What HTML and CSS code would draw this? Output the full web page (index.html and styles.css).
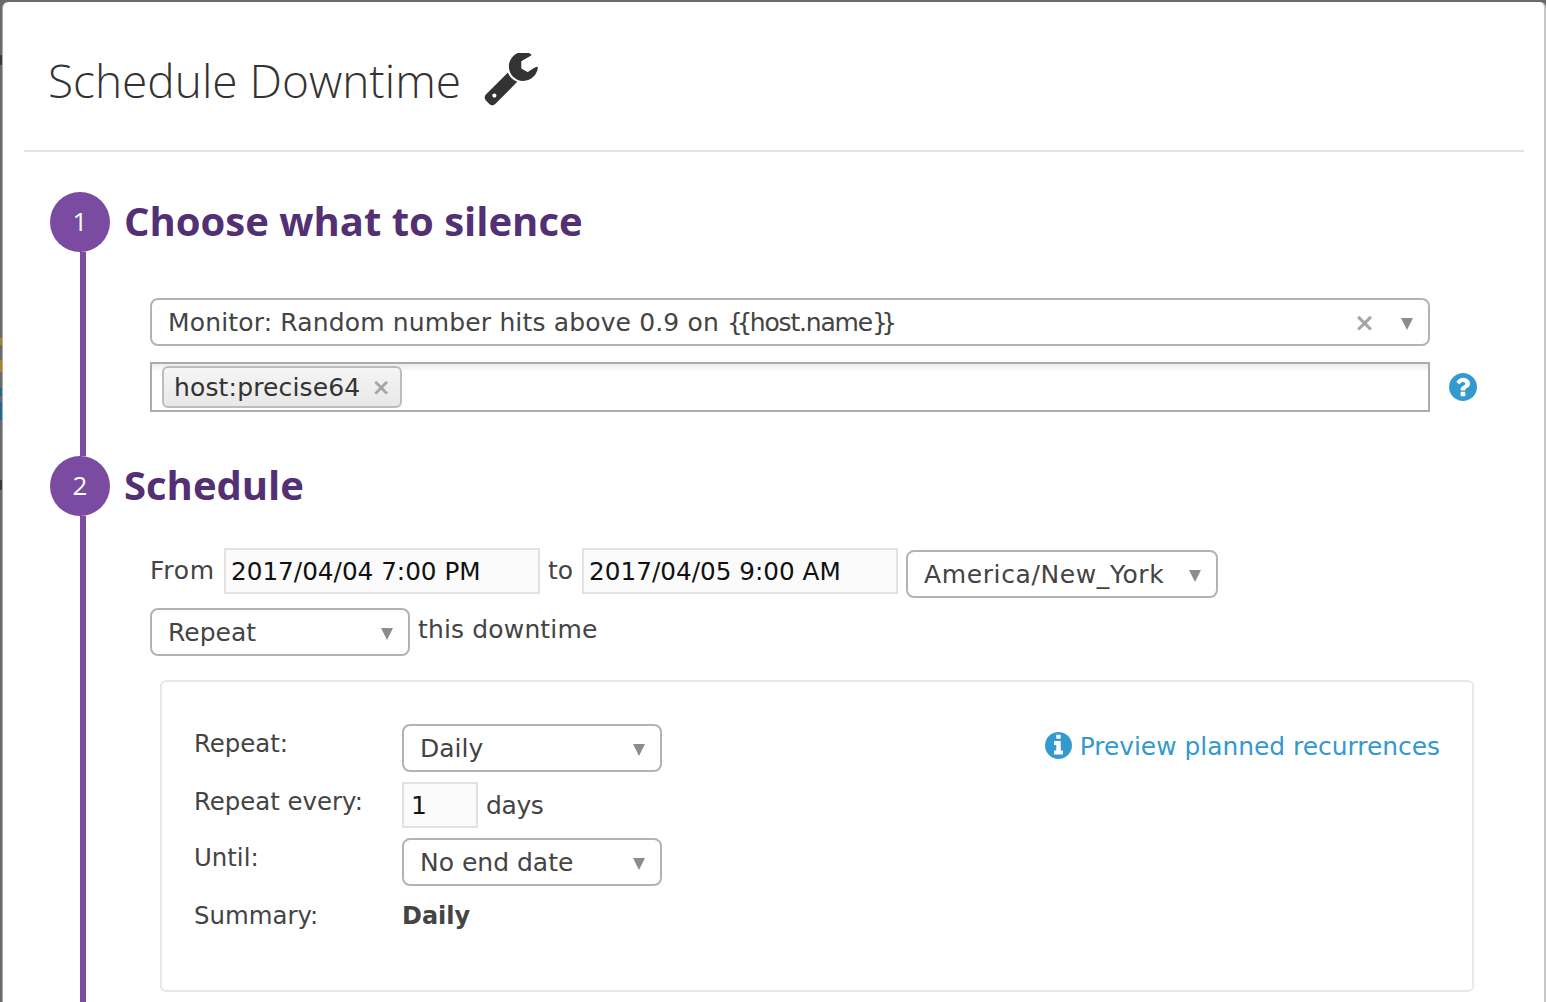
FILE: index.html
```html
<!DOCTYPE html>
<html>
	<head>
		<meta charset="utf-8" />
		<meta name="viewport" content="width=device-width, initial-scale=1">
		<title>Schedule Downtime</title>
		<link rel="stylesheet" href="styles.css">
	</head>
	<body>
		<div class="modal">
			<div class="modal-head">
				<h1>Schedule Downtime</h1>
				<svg class="wrench" viewBox="0 0 1792 1792"><path d="M384 1312q0-26-19-45t-45-19-45 19-19 45 19 45 45 19 45-19 19-45zm644-420l-682 682q-37 37-90 37-52 0-91-37l-106-108q-38-36-38-90 0-53 38-91l681-681q39 98 114.5 173.5t173.5 114.5zm634-435q0 39-23 106-47 134-164.5 217.5t-258.5 83.5q-185 0-316.5-131.5t-131.5-316.5 131.5-316.5 316.5-131.5q58 0 121.5 16.5t107.5 46.5q16 11 16 28t-16 28l-293 169v224l193 107q5-3 79-48.5t135.5-81 70.5-35.5q15 0 23.5 10t8.5 25z"/></svg>
			</div>

			<!-- step 1 -->
			<div class="step-head step-first">
				<span class="step-num">1</span>
				<h2>Choose what to silence</h2>
			</div>
			<div class="step-body step-one">
				<div class="select select-wide">
					<span class="select-text">Monitor: Random number hits above 0.9 on <span class="brace brace-open">{{</span><span class="host">host.name</span><span class="brace">}}</span></span>
					<span class="clear">×</span>
					<span class="arrow"></span>
				</div>
				<div class="tag-row">
					<div class="tags">
						<span class="tag">host:precise64<span class="tag-x">×</span></span>
					</div>
					<svg class="help" viewBox="128 128 1536 1536"><path d="M1024 1376v-192q0-14-9-23t-23-9h-192q-14 0-23 9t-9 23v192q0 14 9 23t23 9h192q14 0 23-9t9-23zm256-672q0-88-55.5-163t-138.5-116-170-41q-243 0-371 213-15 24 8 42l132 100q7 6 19 6 16 0 25-12 53-68 86-92 34-24 86-24 48 0 85.5 26t37.5 59q0 38-20 61t-68 45q-63 28-115.5 86.5t-52.5 125.5v36q0 14 9 23t23 9h192q14 0 23-9t9-23q0-19 21.5-49.5t54.5-49.5q32-18 49-28.5t46-35 44.5-48 28-60.5 12.5-81zm384 192q0 209-103 385.5t-279.5 279.5-385.5 103-385.5-103-279.5-279.5-103-385.5 103-385.5 279.5-279.5 385.5-103 385.5 103 279.5 279.5 103 385.5z"/></svg>
				</div>
			</div>

			<!-- step 2 -->
			<div class="step-head">
				<span class="step-num">2</span>
				<h2>Schedule</h2>
			</div>
			<div class="step-body step-two">
				<div class="time-row">
					<span class="word word-from">From</span>
					<div class="field field-date">2017/04/04 7:00 PM</div>
					<span class="word">to</span>
					<div class="field field-date">2017/04/05 9:00 AM</div>
					<div class="select select-zone">
						<span class="select-text">America/New_York</span>
						<span class="arrow"></span>
					</div>
				</div>
				<div class="repeat-row">
					<div class="select select-small">
						<span class="select-text">Repeat</span>
						<span class="arrow"></span>
					</div>
					<span class="word word-up">this downtime</span>
				</div>

				<div class="panel">
					<div class="form">
						<div class="form-row">
							<span class="label">Repeat:</span>
							<div class="select select-small">
								<span class="select-text">Daily</span>
								<span class="arrow"></span>
							</div>
						</div>
						<div class="form-row form-row-num">
							<span class="label">Repeat every:</span>
							<div class="field field-num">1</div>
							<span class="word days">days</span>
						</div>
						<div class="form-row">
							<span class="label">Until:</span>
							<div class="select select-small">
								<span class="select-text">No end date</span>
								<span class="arrow"></span>
							</div>
						</div>
						<div class="form-row summary">
							<span class="label">Summary:</span>
							<b>Daily</b>
						</div>
					</div>
					<a class="preview" href="#">
						<svg class="info" viewBox="128 128 1536 1536"><path d="M1152 1376v-160q0-14-9-23t-23-9h-96v-512q0-14-9-23t-23-9h-320q-14 0-23 9t-9 23v160q0 14 9 23t23 9h96v320h-96q-14 0-23 9t-9 23v160q0 14 9 23t23 9h448q14 0 23-9t9-23zm-128-896v-160q0-14-9-23t-23-9h-192q-14 0-23 9t-9 23v160q0 14 9 23t23 9h192q14 0 23-9t9-23zm640 416q0 209-103 385.5t-279.5 279.5-385.5 103-385.5-103-279.5-279.5-103-385.5 103-385.5 279.5-279.5 385.5-103 385.5 103 279.5 279.5 103 385.5z"/></svg>
						Preview planned recurrences
					</a>
				</div>
			</div>
		</div>
	</body>
</html>
```

FILE: styles.css
```css
html,body{
	margin: 0;
	padding: 0;
	height: 100%;
	overflow: hidden;
}
body{
	/* page behind the modal shows on the left edge */
	background: linear-gradient(#6b6b6b 55px, #3a3a3a 55px, #3a3a3a 65px, #6b6b6b 65px, #6b6b6b 338px, #a8842a 338px, #a8842a 345px, #6b6b6b 345px, #6b6b6b 360px, #a8842a 360px, #a8842a 372px, #6b6b6b 372px, #6b6b6b 388px, #1f6a8f 388px, #1f6a8f 396px, #6b6b6b 396px, #6b6b6b 402px, #1f6a8f 402px, #1f6a8f 420px, #6b6b6b 420px, #6b6b6b 480px, #3a3a3a 480px, #3a3a3a 490px, #6b6b6b 490px);
	font-family: "DejaVu Sans", sans-serif;
	font-size: 25px;
	color: #444;
}
h1,h2{
	margin: 0;
}
a{
	text-decoration: none;
}
.modal{
	box-sizing: border-box;
	height: 1000px;
	margin: 2px 0 0 2px;
	background: white;
	border-left: 1px solid #aaa;
	border-right: 2px solid #c6c6c6;
	border-radius: 6px 6px 0 0;
	overflow: hidden;
}
.modal-head{
	display: flex;
	align-items: center;
	box-sizing: border-box;
	height: 150px;
	margin: 0 20px 0 21px;
	padding: 8px 0 0 24px;
	border-bottom: 2px solid #e2e2e2;
}
h1{
	font-family: "Open Sans", sans-serif;
	font-weight: 300;
	font-size: 46px;
	color: #333;
}
.wrench{
	width: 58px;
	height: 58px;
	margin: 4px 0 0 23px;
	fill: #333;
}
.step-head{
	display: flex;
	align-items: center;
	gap: 14px;
	height: 60px;
	margin-left: 47px;
}
.step-first{
	margin-top: 40px;
}
.step-num{
	width: 60px;
	height: 60px;
	line-height: 58px;
	border-radius: 50%;
	background: #7a4ba1;
	color: white;
	text-align: center;
	font-family: "Open Sans", sans-serif;
	font-size: 26px;
}
h2{
	margin-bottom: 4px;
	font-family: "Open Sans", sans-serif;
	font-weight: 700;
	font-size: 40px;
	color: #532f74;
}
.step-body{
	box-sizing: border-box;
	margin-left: 77px;
	padding-left: 64px;
	border-left: 6px solid #7a4ba1;
}
.step-one{
	height: 204px;
	padding-top: 46px;
}
.step-two{
	padding: 32px 0 30px 64px;
}
.select{
	display: flex;
	align-items: center;
	box-sizing: border-box;
	height: 48px;
	padding: 0 16px;
	border: 2px solid #b3b3b3;
	border-radius: 8px;
	background: white;
}
.select-text{
	flex: 1;
	white-space: nowrap;
}
.select-wide{
	width: 1280px;
}
.select-wide .select-text{
	letter-spacing: 0.15px;
}
.select-wide .brace{
	letter-spacing: -6.5px;
}
.select-wide .brace-open{
	margin-right: 4px;
}
.select-wide .host{
	letter-spacing: -1.2px;
}
.select-zone{
	width: 312px;
	margin-top: 2px;
	letter-spacing: 0.6px;
}
.select-small{
	width: 260px;
}
.arrow{
	width: 0;
	height: 0;
	margin: 3px -1px 0 0;
	border-left: 6px solid transparent;
	border-right: 6px solid transparent;
	border-top: 12px solid #8c8c8c;
}
.clear{
	margin-right: 26px;
	color: #a5a5a5;
	font-weight: bold;
}
.tag-row{
	display: flex;
	align-items: center;
	margin-top: 16px;
}
.tags{
	box-sizing: border-box;
	width: 1280px;
	height: 50px;
	padding: 2px 10px;
	border: 2px solid #acacac;
	background: linear-gradient(#ececec, white 8px);
}
.tag{
	display: inline-flex;
	align-items: center;
	box-sizing: border-box;
	height: 42px;
	padding: 0 9px 0 10px;
	border: 2px solid #bcbcbc;
	border-radius: 6px;
	background: linear-gradient(#f5f5f5, #e8e8e8);
	color: #333;
	letter-spacing: 0.15px;
}
.tag-x{
	margin-left: 11px;
	color: #a5a5a5;
	font-weight: bold;
	font-size: 23px;
}
.help{
	width: 28px;
	height: 28px;
	margin-left: 19px;
	fill: #3399cf;
}
.time-row{
	display: flex;
	align-items: flex-start;
}
.word{
	line-height: 46px;
	white-space: nowrap;
}
.word-from{
	width: 65px;
	letter-spacing: 0.7px;
}
.field{
	box-sizing: border-box;
	height: 46px;
	line-height: 43px;
	padding-left: 5px;
	border: 2px solid #e2e2e2;
	background: #fbfbfb;
	color: #111;
}
.field-date{
	width: 316px;
	margin: 0 8px 0 9px;
	font-size: 24.7px;
}
.repeat-row{
	display: flex;
	margin-top: 10px;
}
.word-up{
	margin-left: 8px;
	line-height: 44px;
	letter-spacing: 0.15px;
}
.panel{
	display: flex;
	justify-content: space-between;
	align-items: flex-start;
	box-sizing: border-box;
	width: 1314px;
	height: 312px;
	margin: 24px 0 0 10px;
	padding: 42px 32px 0;
	border: 2px solid #e8e8e8;
	border-radius: 6px;
}
.panel .select-text{
	padding-top: 1px;
}
.form-row{
	display: flex;
	margin-bottom: 10px;
}
.form-row-num{
	height: 46px;
}
.label{
	width: 208px;
	line-height: 40px;
	font-size: 24.4px;
}
.field-num{
	width: 76px;
	padding-left: 7px;
}
.days{
	margin-left: 8px;
	line-height: 48px;
	letter-spacing: -0.4px;
}
.summary b{
	font-size: 24px;
	line-height: 40px;
}
.preview{
	display: flex;
	align-items: center;
	gap: 8px;
	color: #3399cf;
	line-height: 46px;
	font-size: 24.9px;
}
.info{
	width: 27px;
	height: 27px;
	margin-top: -3px;
	fill: #3399cf;
}
```
